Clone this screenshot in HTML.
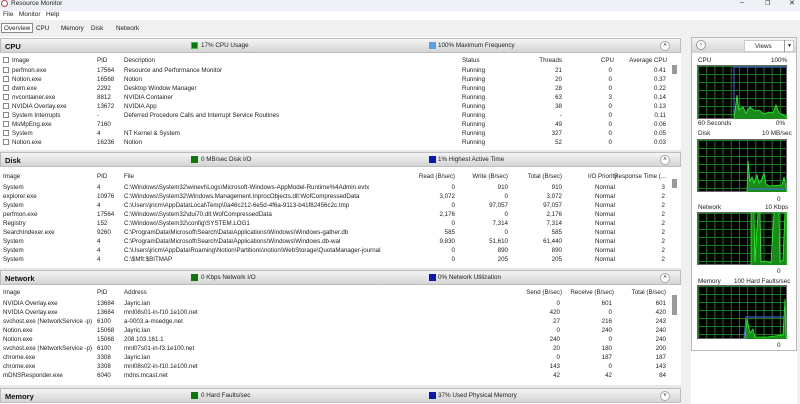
<!DOCTYPE html>
<html><head><meta charset="utf-8"><style>
*{margin:0;padding:0;box-sizing:border-box}
body{width:800px;height:404px;background:#fff;font-family:"Liberation Sans",sans-serif;font-size:6.2px;color:#222;position:relative;overflow:hidden}
.a{position:absolute;white-space:nowrap}
.r{position:absolute;white-space:nowrap;text-align:right}
.hdr{position:absolute;left:0;width:681px;height:15px;background:linear-gradient(#f4f4f4,#d4d4d4);border:1px solid #bdbdbd}
.hdr b{position:absolute;left:4px;top:3px;font-size:7.5px;color:#111}
.sq{position:absolute;top:3px;width:7px;height:7px}
.hdr span{position:absolute;top:3px;font-size:6.3px}
.up{position:absolute;right:10px;top:2px;width:10px;height:10px;border-radius:50%;background:#fff;border:1px solid #aaa;font-size:6px;text-align:center;line-height:8px}
.cb{position:absolute;left:3px;width:6px;height:6px;border:1px solid #888;background:#fff}
.sb{position:absolute;left:672px;width:5px;background:#999}
.g{position:absolute;left:697px;width:90px;background-color:#000;background-image:linear-gradient(90deg,#1b7d1b 1px,transparent 1px),linear-gradient(#1b7d1b 1px,transparent 1px);background-size:8.2px 8px;border:1px solid #666}
.gl{position:absolute;font-size:6.3px}
</style></head><body>
<div class="a" style="left:0;top:0;width:800px;height:11px;background:#eef1f5"></div>
<div class="a" style="left:1px;top:0;width:7px;height:7px;border-radius:50%;border:1px solid #b44;background:#fff"></div>
<div class="a" style="left:11px;top:0;font-size:6.5px">Resource Monitor</div>
<div class="a" style="left:740px;top:-1px;font-size:7px">–</div>
<div class="a" style="left:765px;top:0;font-size:6px">❐</div>
<div class="a" style="left:789px;top:-1px;font-size:7px">✕</div>
<div class="a" style="left:3px;top:11px;font-size:6.5px">File&nbsp;&nbsp;&nbsp;Monitor&nbsp;&nbsp;&nbsp;Help</div>
<div class="a" style="left:0;top:20px;width:800px;height:17px;background:#f0f0f0"></div>
<div class="a" style="left:1px;top:23px;width:32px;height:10px;border:1px solid #888;background:#fff;font-size:6.3px;padding:1px 2px">Overview</div>
<div class="a" style="left:36px;top:25px;font-size:6.3px">CPU</div>
<div class="a" style="left:61px;top:25px;font-size:6.3px">Memory</div>
<div class="a" style="left:91px;top:25px;font-size:6.3px">Disk</div>
<div class="a" style="left:116px;top:25px;font-size:6.3px">Network</div>
<div class="a" style="left:681px;top:37px;width:10px;height:367px;background:#f0f0f0"></div>
<div class="a" style="left:797px;top:37px;width:3px;height:367px;background:#f0f0f0"></div>

<div class="hdr" style="top:38px"><b>CPU</b><div class="sq" style="left:190px;background:#0a7a0a;border:1px solid #3c3"></div><span style="left:200px">17% CPU Usage</span><div class="sq" style="left:428px;background:#5aa0e0"></div><span style="left:437px">100% Maximum Frequency</span><div class="up">˄</div></div>
<div class="cb" style="top:57px"></div>
<div class="a" style="left:12px;top:57px">Image</div><div class="a" style="left:97px;top:57px">PID</div><div class="a" style="left:124px;top:57px">Description</div><div class="a" style="left:462px;top:57px">Status</div><div class="r" style="right:238px;top:57px">Threads</div><div class="r" style="right:186px;top:57px">CPU</div><div class="r" style="right:133px;top:57px">Average CPU</div>
<div class="sb" style="top:65px;height:9px"></div>

<div class="cb" style="top:67px"></div><div class="a" style="left:12px;top:67px">perfmon.exe</div><div class="a" style="left:97px;top:67px">17564</div><div class="a" style="left:124px;top:67px">Resource and Performance Monitor</div><div class="a" style="left:462px;top:67px">Running</div><div class="r" style="right:238px;top:67px">21</div><div class="r" style="right:188px;top:67px">0</div><div class="r" style="right:134px;top:67px">0.41</div>
<div class="cb" style="top:76px"></div><div class="a" style="left:12px;top:76px">Notion.exe</div><div class="a" style="left:97px;top:76px">16568</div><div class="a" style="left:124px;top:76px">Notion</div><div class="a" style="left:462px;top:76px">Running</div><div class="r" style="right:238px;top:76px">20</div><div class="r" style="right:188px;top:76px">0</div><div class="r" style="right:134px;top:76px">0.37</div>
<div class="cb" style="top:85px"></div><div class="a" style="left:12px;top:85px">dwm.exe</div><div class="a" style="left:97px;top:85px">2292</div><div class="a" style="left:124px;top:85px">Desktop Window Manager</div><div class="a" style="left:462px;top:85px">Running</div><div class="r" style="right:238px;top:85px">28</div><div class="r" style="right:188px;top:85px">0</div><div class="r" style="right:134px;top:85px">0.22</div>
<div class="cb" style="top:94px"></div><div class="a" style="left:12px;top:94px">nvcontainer.exe</div><div class="a" style="left:97px;top:94px">8812</div><div class="a" style="left:124px;top:94px">NVIDIA Container</div><div class="a" style="left:462px;top:94px">Running</div><div class="r" style="right:238px;top:94px">63</div><div class="r" style="right:188px;top:94px">3</div><div class="r" style="right:134px;top:94px">0.14</div>
<div class="cb" style="top:103px"></div><div class="a" style="left:12px;top:103px">NVIDIA Overlay.exe</div><div class="a" style="left:97px;top:103px">13672</div><div class="a" style="left:124px;top:103px">NVIDIA App</div><div class="a" style="left:462px;top:103px">Running</div><div class="r" style="right:238px;top:103px">38</div><div class="r" style="right:188px;top:103px">0</div><div class="r" style="right:134px;top:103px">0.13</div>
<div class="cb" style="top:112px"></div><div class="a" style="left:12px;top:112px">System Interrupts</div><div class="a" style="left:97px;top:112px">-</div><div class="a" style="left:124px;top:112px">Deferred Procedure Calls and Interrupt Service Routines</div><div class="a" style="left:462px;top:112px">Running</div><div class="r" style="right:238px;top:112px">-</div><div class="r" style="right:188px;top:112px">0</div><div class="r" style="right:134px;top:112px">0.11</div>
<div class="cb" style="top:121px"></div><div class="a" style="left:12px;top:121px">MsMpEng.exe</div><div class="a" style="left:97px;top:121px">7160</div><div class="a" style="left:462px;top:121px">Running</div><div class="r" style="right:238px;top:121px">49</div><div class="r" style="right:188px;top:121px">0</div><div class="r" style="right:134px;top:121px">0.06</div>
<div class="cb" style="top:130px"></div><div class="a" style="left:12px;top:130px">System</div><div class="a" style="left:97px;top:130px">4</div><div class="a" style="left:124px;top:130px">NT Kernel &amp; System</div><div class="a" style="left:462px;top:130px">Running</div><div class="r" style="right:238px;top:130px">327</div><div class="r" style="right:188px;top:130px">0</div><div class="r" style="right:134px;top:130px">0.05</div>
<div class="cb" style="top:139px"></div><div class="a" style="left:12px;top:139px">Notion.exe</div><div class="a" style="left:97px;top:139px">16236</div><div class="a" style="left:124px;top:139px">Notion</div><div class="a" style="left:462px;top:139px">Running</div><div class="r" style="right:238px;top:139px">52</div><div class="r" style="right:188px;top:139px">0</div><div class="r" style="right:134px;top:139px">0.03</div>
<div class="a" style="left:0;top:147px;width:681px;height:3px;background:#fff"></div>
<div class="a" style="left:0;top:150px;width:681px;height:2px;background:#e8e8e8"></div>

<div class="hdr" style="top:152px"><b>Disk</b><div class="sq" style="left:190px;background:#0a7a0a"></div><span style="left:200px">0 MB/sec Disk I/O</span><div class="sq" style="left:428px;background:#0a1ab0"></div><span style="left:437px">1% Highest Active Time</span><div class="up">˄</div></div>
<div class="a" style="left:3px;top:173px">Image</div><div class="a" style="left:97px;top:173px">PID</div><div class="a" style="left:124px;top:173px">File</div><div class="r" style="right:345px;top:173px">Read (B/sec)</div><div class="r" style="right:292px;top:173px">Write (B/sec)</div><div class="r" style="right:238px;top:173px">Total (B/sec)</div><div class="a" style="left:588px;top:173px">I/O Priority</div><div class="r" style="right:134px;top:173px">Response Time (...</div>
<div class="sb" style="top:179px;height:9px"></div>
<div class="a" style="left:3px;top:184px">System</div><div class="a" style="left:97px;top:184px">4</div><div class="a" style="left:124px;top:184px">C:\Windows\System32\winevt\Logs\Microsoft-Windows-AppModel-Runtime%4Admin.evtx</div><div class="r" style="right:345px;top:184px">0</div><div class="r" style="right:292px;top:184px">910</div><div class="r" style="right:238px;top:184px">910</div><div class="a" style="left:595px;top:184px">Normal</div><div class="r" style="right:135px;top:184px">3</div>
<div class="a" style="left:3px;top:193px">explorer.exe</div><div class="a" style="left:97px;top:193px">10976</div><div class="a" style="left:124px;top:193px">C:\Windows\System32\Windows.Management.InprocObjects.dll:WofCompressedData</div><div class="r" style="right:345px;top:193px">3,072</div><div class="r" style="right:292px;top:193px">0</div><div class="r" style="right:238px;top:193px">3,072</div><div class="a" style="left:595px;top:193px">Normal</div><div class="r" style="right:135px;top:193px">2</div>
<div class="a" style="left:3px;top:202px">System</div><div class="a" style="left:97px;top:202px">4</div><div class="a" style="left:124px;top:202px">C:\Users\jricm\AppData\Local\Temp\0a46c212-6e5d-4f6a-9113-b41f82456c2c.tmp</div><div class="r" style="right:345px;top:202px">0</div><div class="r" style="right:292px;top:202px">97,057</div><div class="r" style="right:238px;top:202px">97,057</div><div class="a" style="left:595px;top:202px">Normal</div><div class="r" style="right:135px;top:202px">2</div>
<div class="a" style="left:3px;top:211px">perfmon.exe</div><div class="a" style="left:97px;top:211px">17564</div><div class="a" style="left:124px;top:211px">C:\Windows\System32\dui70.dll:WofCompressedData</div><div class="r" style="right:345px;top:211px">2,176</div><div class="r" style="right:292px;top:211px">0</div><div class="r" style="right:238px;top:211px">2,176</div><div class="a" style="left:595px;top:211px">Normal</div><div class="r" style="right:135px;top:211px">2</div>
<div class="a" style="left:3px;top:220px">Registry</div><div class="a" style="left:97px;top:220px">152</div><div class="a" style="left:124px;top:220px">C:\Windows\System32\config\SYSTEM.LOG1</div><div class="r" style="right:345px;top:220px">0</div><div class="r" style="right:292px;top:220px">7,314</div><div class="r" style="right:238px;top:220px">7,314</div><div class="a" style="left:595px;top:220px">Normal</div><div class="r" style="right:135px;top:220px">2</div>
<div class="a" style="left:3px;top:229px">SearchIndexer.exe</div><div class="a" style="left:97px;top:229px">9260</div><div class="a" style="left:124px;top:229px">C:\ProgramData\Microsoft\Search\Data\Applications\Windows\Windows-gather.db</div><div class="r" style="right:345px;top:229px">585</div><div class="r" style="right:292px;top:229px">0</div><div class="r" style="right:238px;top:229px">585</div><div class="a" style="left:595px;top:229px">Normal</div><div class="r" style="right:135px;top:229px">2</div>
<div class="a" style="left:3px;top:238px">System</div><div class="a" style="left:97px;top:238px">4</div><div class="a" style="left:124px;top:238px">C:\ProgramData\Microsoft\Search\Data\Applications\Windows\Windows.db-wal</div><div class="r" style="right:345px;top:238px">9,830</div><div class="r" style="right:292px;top:238px">51,610</div><div class="r" style="right:238px;top:238px">61,440</div><div class="a" style="left:595px;top:238px">Normal</div><div class="r" style="right:135px;top:238px">2</div>
<div class="a" style="left:3px;top:247px">System</div><div class="a" style="left:97px;top:247px">4</div><div class="a" style="left:124px;top:247px">C:\Users\jricm\AppData\Roaming\Notion\Partitions\notion\WebStorage\QuotaManager-journal</div><div class="r" style="right:345px;top:247px">0</div><div class="r" style="right:292px;top:247px">890</div><div class="r" style="right:238px;top:247px">890</div><div class="a" style="left:595px;top:247px">Normal</div><div class="r" style="right:135px;top:247px">2</div>
<div class="a" style="left:3px;top:256px">System</div><div class="a" style="left:97px;top:256px">4</div><div class="a" style="left:124px;top:256px">C:\$Mft:$BITMAP</div><div class="r" style="right:345px;top:256px">0</div><div class="r" style="right:292px;top:256px">205</div><div class="r" style="right:238px;top:256px">205</div><div class="a" style="left:595px;top:256px">Normal</div><div class="r" style="right:135px;top:256px">2</div>
<div class="a" style="left:0;top:264px;width:681px;height:4px;background:#fff"></div>
<div class="a" style="left:0;top:268px;width:681px;height:2px;background:#e8e8e8"></div>

<div class="hdr" style="top:270px"><b>Network</b><div class="sq" style="left:190px;background:#0a7a0a"></div><span style="left:200px">0 Kbps Network I/O</span><div class="sq" style="left:428px;background:#0a1ab0"></div><span style="left:437px">0% Network Utilization</span><div class="up">˄</div></div>
<div class="a" style="left:3px;top:289px">Image</div><div class="a" style="left:97px;top:289px">PID</div><div class="a" style="left:124px;top:289px">Address</div><div class="r" style="right:238px;top:289px">Send (B/sec)</div><div class="r" style="right:186px;top:289px">Receive (B/sec)</div><div class="r" style="right:134px;top:289px">Total (B/sec)</div>
<div class="sb" style="top:295px;height:20px"></div>
<div class="a" style="left:3px;top:300px">NVIDIA Overlay.exe</div><div class="a" style="left:97px;top:300px">13684</div><div class="a" style="left:124px;top:300px">Jayric.lan</div><div class="r" style="right:240px;top:300px">0</div><div class="r" style="right:188px;top:300px">601</div><div class="r" style="right:134px;top:300px">601</div>
<div class="a" style="left:3px;top:309px">NVIDIA Overlay.exe</div><div class="a" style="left:97px;top:309px">13684</div><div class="a" style="left:124px;top:309px">mnl08s01-in-f10.1e100.net</div><div class="r" style="right:240px;top:309px">420</div><div class="r" style="right:188px;top:309px">0</div><div class="r" style="right:134px;top:309px">420</div>
<div class="a" style="left:3px;top:318px">svchost.exe (NetworkService -p)</div><div class="a" style="left:97px;top:318px">6100</div><div class="a" style="left:124px;top:318px">a-0003.a-msedge.net</div><div class="r" style="right:240px;top:318px">27</div><div class="r" style="right:188px;top:318px">216</div><div class="r" style="right:134px;top:318px">243</div>
<div class="a" style="left:3px;top:327px">Notion.exe</div><div class="a" style="left:97px;top:327px">15068</div><div class="a" style="left:124px;top:327px">Jayric.lan</div><div class="r" style="right:240px;top:327px">0</div><div class="r" style="right:188px;top:327px">240</div><div class="r" style="right:134px;top:327px">240</div>
<div class="a" style="left:3px;top:336px">Notion.exe</div><div class="a" style="left:97px;top:336px">15068</div><div class="a" style="left:124px;top:336px">208.103.161.1</div><div class="r" style="right:240px;top:336px">240</div><div class="r" style="right:188px;top:336px">0</div><div class="r" style="right:134px;top:336px">240</div>
<div class="a" style="left:3px;top:345px">svchost.exe (NetworkService -p)</div><div class="a" style="left:97px;top:345px">6100</div><div class="a" style="left:124px;top:345px">mnl07s01-in-f3.1e100.net</div><div class="r" style="right:240px;top:345px">20</div><div class="r" style="right:188px;top:345px">180</div><div class="r" style="right:134px;top:345px">200</div>
<div class="a" style="left:3px;top:354px">chrome.exe</div><div class="a" style="left:97px;top:354px">3308</div><div class="a" style="left:124px;top:354px">Jayric.lan</div><div class="r" style="right:240px;top:354px">0</div><div class="r" style="right:188px;top:354px">187</div><div class="r" style="right:134px;top:354px">187</div>
<div class="a" style="left:3px;top:363px">chrome.exe</div><div class="a" style="left:97px;top:363px">3308</div><div class="a" style="left:124px;top:363px">mnl08s02-in-f10.1e100.net</div><div class="r" style="right:240px;top:363px">143</div><div class="r" style="right:188px;top:363px">0</div><div class="r" style="right:134px;top:363px">143</div>
<div class="a" style="left:3px;top:372px">mDNSResponder.exe</div><div class="a" style="left:97px;top:372px">6040</div><div class="a" style="left:124px;top:372px">mdns.mcast.net</div><div class="r" style="right:240px;top:372px">42</div><div class="r" style="right:188px;top:372px">42</div><div class="r" style="right:134px;top:372px">84</div>
<div class="a" style="left:0;top:381px;width:681px;height:4px;background:#fff"></div>
<div class="a" style="left:0;top:385px;width:681px;height:3px;background:#e8e8e8"></div>

<div class="hdr" style="top:388px"><b>Memory</b><div class="sq" style="left:190px;background:#0a7a0a"></div><span style="left:200px">0 Hard Faults/sec</span><div class="sq" style="left:428px;background:#0a1ab0"></div><span style="left:437px">37% Used Physical Memory</span><div class="up">˅</div></div>

<div class="a" style="left:691px;top:37px;width:106px;height:314px;border:1px solid #bbb;background:#fff"></div>
<div class="a" style="left:692px;top:38px;width:104px;height:15px;background:linear-gradient(#f4f4f4,#d4d4d4)"></div>
<div class="a" style="left:696px;top:40px;width:10px;height:10px;border-radius:50%;border:1px solid #999;background:#fff;font-size:6px;text-align:center;line-height:8px">›</div>
<div class="a" style="left:744px;top:40px;width:50px;height:12px;background:#fff;border:1px solid #ccc;font-size:6.3px;padding:2px 0 0 10px">Views</div>
<div class="a" style="left:784px;top:40px;width:10px;height:12px;border-left:1px solid #999;font-size:5px;text-align:center;line-height:12px">▼</div>

<div class="gl" style="left:698px;top:57px">CPU</div><div class="gl" style="left:771px;top:57px">100%</div>
<div class="g" style="top:65px;height:54px"></div>
<svg class="a" style="left:697px;top:65px" width="90" height="54"><polyline fill="none" stroke="#4a6cf0" stroke-width="1" points="37,54 37,2 90,2"/><polyline fill="#1a8a1a" stroke="#2f2" stroke-width="0.8" points="37,54 40,30 42,45 46,42 49,48 53,42 58,46 62,45 67,49 72,47 76,48 79,40 82,48 86,50 90,52 90,54"/></svg>
<div class="gl" style="left:698px;top:120px">60 Seconds</div><div class="gl" style="left:776px;top:120px">0%</div>
<div class="gl" style="left:698px;top:130px">Disk</div><div class="gl" style="left:762px;top:130px">10 MB/sec</div>
<div class="g" style="top:139px;height:53px"></div>
<svg class="a" style="left:697px;top:139px" width="90" height="53"><polyline fill="#1a8a1a" stroke="#2f2" stroke-width="0.8" points="50,53 51,22 53,42 55,38 57,44 60,36 62,44 64,42 67,34 69,45 72,47 85,46 87,38 89,48 90,53"/><polyline fill="none" stroke="#4a6cf0" points="50,50 90,50"/></svg>
<div class="gl" style="left:777px;top:196px">0</div>
<div class="gl" style="left:698px;top:204px">Network</div><div class="gl" style="left:765px;top:204px">10 Kbps</div>
<div class="g" style="top:212px;height:53px"></div>
<svg class="a" style="left:697px;top:212px" width="90" height="53"><polyline fill="#1a8a1a" stroke="#2f2" stroke-width="0.8" points="54,53 54,0 57,0 58,50 61,0 63,0 64,50 68,49 74,51 77,0 82,0 83,50 86,48 88,0 90,0 90,53"/></svg>
<div class="gl" style="left:777px;top:268px">0</div>
<div class="gl" style="left:698px;top:278px">Memory</div><div class="gl" style="left:734px;top:278px">100 Hard Faults/sec</div>
<div class="g" style="top:285px;height:54px"></div>
<svg class="a" style="left:697px;top:285px" width="90" height="54"><polyline fill="none" stroke="#4a6cf0" points="47,54 49,32 90,32"/><polyline fill="#1a8a1a" stroke="#2f2" stroke-width="0.8" points="48,54 50,34 53,48 56,44 58,52 70,52 86,50 88,14 89,50 90,54"/></svg>
<div class="gl" style="left:777px;top:342px">0</div>
</body></html>
